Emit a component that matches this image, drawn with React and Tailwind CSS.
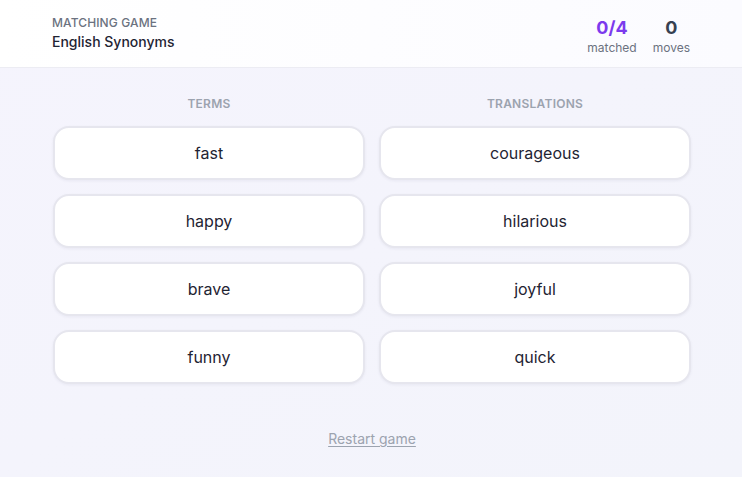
import { useState } from "react";

const terms = ["fast", "happy", "brave", "funny"];
const translations = ["courageous", "hilarious", "joyful", "quick"];

function Card({ label }) {
    return (
        <button className="h-[54px] w-full rounded-2xl border-2 border-[#e6e6ee] bg-white text-[16px] font-normal text-[#1f2433] shadow-[0_1px_3px_rgba(30,30,80,0.06)]">
            {label}
        </button>
    );
}

export default function App() {
    const [moves] = useState(0);

    return (
        <div
            className="min-h-[477px] bg-gradient-to-br from-[#f5f4fd] to-[#f3f4fb] text-[#1f2433]"
            style={{ fontFamily: "Inter, 'Noto Sans', sans-serif" }}
        >
            <header className="flex h-[68px] items-center justify-between border-b border-[#ececf3] bg-gradient-to-r from-white to-[#fbfbff] px-[52px]">
                <div className="flex flex-col">
                    <span className="text-[12px] font-medium uppercase leading-4 tracking-[0.01em] text-[#6b7280]">Matching game</span>
                    <span className="mt-[1px] text-[14px] font-medium leading-5 text-[#1f2433]">English Synonyms</span>
                </div>
                <div className="flex gap-4 pt-1">
                    <div className="flex flex-col items-center">
                        <span className="text-[18px] font-bold leading-6 text-[#7c3aed]">0/4</span>
                        <span className="text-[12px] leading-4 text-[#6b7280]">matched</span>
                    </div>
                    <div className="flex flex-col items-center">
                        <span className="text-[18px] font-bold leading-6 text-[#374151]">{moves}</span>
                        <span className="text-[12px] leading-4 text-[#6b7280]">moves</span>
                    </div>
                </div>
            </header>

            <main className="ml-[53px] w-[638px] pt-[28px]">
                <div className="grid grid-cols-2 gap-x-[14px]">
                    <div className="flex flex-col">
                        <h3 className="mb-[14px] text-center text-[12px] font-semibold uppercase leading-4 tracking-[0.02em] text-[#9ca3af]">Terms</h3>
                        <div className="flex flex-col gap-[14px]">
                            {terms.map((t) => (
                                <Card key={t} label={t} />
                            ))}
                        </div>
                    </div>
                    <div className="flex flex-col">
                        <h3 className="mb-[14px] text-center text-[12px] font-semibold uppercase leading-4 tracking-[0.02em] text-[#9ca3af]">Translations</h3>
                        <div className="flex flex-col gap-[14px]">
                            {translations.map((t) => (
                                <Card key={t} label={t} />
                            ))}
                        </div>
                    </div>
                </div>

                <div className="mt-[45px] flex justify-center">
                    <button className="text-[14px] leading-5 text-[#9ca3af] underline underline-offset-2">Restart game</button>
                </div>
            </main>
        </div>
    );
}
